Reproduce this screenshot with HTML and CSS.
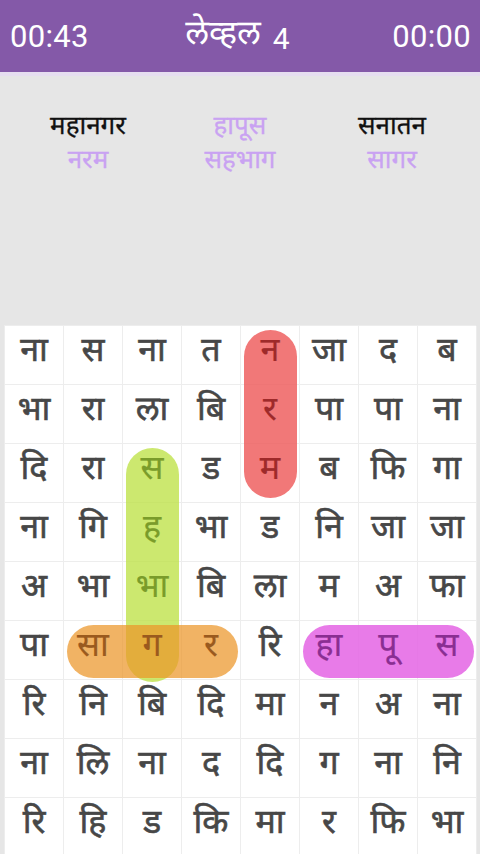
FILE: index.html
```html
<!DOCTYPE html>
<html lang="mr">
<head>
<meta charset="utf-8">
<link rel="stylesheet" href="styles.css">
</head>
<body>
<header class="topbar">
  <span class="time">00:43</span>
  <span class="level">लेव्हल <span class="num">4</span></span>
  <span class="time">00:00</span>
</header>
<section class="words">
  <span class="word">महानगर</span>
  <span class="word found">हापूस</span>
  <span class="word">सनातन</span>
  <span class="word found">नरम</span>
  <span class="word found">सहभाग</span>
  <span class="word found">सागर</span>
</section>
<main class="board">
  <div class="pill pill-red"></div>
  <div class="pill pill-green"></div>
  <div class="pill pill-orange"></div>
  <div class="pill pill-pink"></div>

  <div class="cell"><span>ना</span></div><div class="cell"><span>स</span></div><div class="cell"><span>ना</span></div><div class="cell"><span>त</span></div><div class="cell t-red"><span>न</span></div><div class="cell"><span>जा</span></div><div class="cell"><span>द</span></div><div class="cell"><span>ब</span></div>
  <div class="cell"><span>भा</span></div><div class="cell"><span>रा</span></div><div class="cell"><span>ला</span></div><div class="cell"><span>बि</span></div><div class="cell t-red"><span>र</span></div><div class="cell"><span>पा</span></div><div class="cell"><span>पा</span></div><div class="cell"><span>ना</span></div>
  <div class="cell"><span>दि</span></div><div class="cell"><span>रा</span></div><div class="cell t-green"><span>स</span></div><div class="cell"><span>ड</span></div><div class="cell t-red"><span>म</span></div><div class="cell"><span>ब</span></div><div class="cell"><span>फि</span></div><div class="cell"><span>गा</span></div>
  <div class="cell"><span>ना</span></div><div class="cell"><span>गि</span></div><div class="cell t-green"><span>ह</span></div><div class="cell"><span>भा</span></div><div class="cell"><span>ड</span></div><div class="cell"><span>नि</span></div><div class="cell"><span>जा</span></div><div class="cell"><span>जा</span></div>
  <div class="cell"><span>अ</span></div><div class="cell"><span>भा</span></div><div class="cell t-green"><span>भा</span></div><div class="cell"><span>बि</span></div><div class="cell"><span>ला</span></div><div class="cell"><span>म</span></div><div class="cell"><span>अ</span></div><div class="cell"><span>फा</span></div>
  <div class="cell"><span>पा</span></div><div class="cell t-orange"><span>सा</span></div><div class="cell t-orange"><span>ग</span></div><div class="cell t-orange"><span>र</span></div><div class="cell"><span>रि</span></div><div class="cell t-pink"><span>हा</span></div><div class="cell t-pink"><span>पू</span></div><div class="cell t-pink"><span>स</span></div>
  <div class="cell"><span>रि</span></div><div class="cell"><span>नि</span></div><div class="cell"><span>बि</span></div><div class="cell"><span>दि</span></div><div class="cell"><span>मा</span></div><div class="cell"><span>न</span></div><div class="cell"><span>अ</span></div><div class="cell"><span>ना</span></div>
  <div class="cell"><span>ना</span></div><div class="cell"><span>लि</span></div><div class="cell"><span>ना</span></div><div class="cell"><span>द</span></div><div class="cell"><span>दि</span></div><div class="cell"><span>ग</span></div><div class="cell"><span>ना</span></div><div class="cell"><span>नि</span></div>
  <div class="cell"><span>रि</span></div><div class="cell"><span>हि</span></div><div class="cell"><span>ड</span></div><div class="cell"><span>कि</span></div><div class="cell"><span>मा</span></div><div class="cell"><span>र</span></div><div class="cell"><span>फि</span></div><div class="cell"><span>भा</span></div>
</main>
</body>
</html>
```
FILE: styles.css
```css
html, body {
  margin: 0;
  padding: 0;
}
body {
  width: 480px;
  height: 854px;
  overflow: hidden;
  background: #e6e6e6;
  font-family: "Noto Sans Devanagari", "Lohit Devanagari", "Noto Sans", Roboto, sans-serif;
}
.topbar {
  height: 72px;
  background: #8459a8;
  border-bottom: 4px solid #e6def0;
  display: flex;
  align-items: center;
  justify-content: space-between;
  padding: 0 9px 0 10px;
  color: #ffffff;
}
.time {
  font-family: Roboto, "Liberation Sans", sans-serif;
  font-size: 31px;
  letter-spacing: 0.3px;
}
.level {
  font-size: 34px;
  margin-right: 6px;
  display: flex;
  align-items: center;
}
.level .num {
  font-family: Roboto, "Liberation Sans", sans-serif;
  font-size: 30px;
  margin-left: 12px;
  padding-top: 4px;
}
.words {
  display: grid;
  grid-template-columns: 176px 128px 176px;
  justify-items: center;
  padding-top: 35px;
  height: 249px;
  box-sizing: border-box;
  align-content: start;
}
.word {
  font-size: 26px;
  line-height: 34px;
  color: #111111;
  -webkit-text-stroke: 0.3px currentColor;
}
.found {
  color: #c9a2f2;
}
.board {
  position: relative;
  margin: 0 4px;
  display: grid;
  grid-template-columns: repeat(8, 59px);
  grid-auto-rows: 59px;
  background: #ffffff;
  border-top: 1px solid #ededed;
  border-left: 1px solid #ededed;
}
.cell {
  display: flex;
  align-items: center;
  justify-content: center;
  border-right: 1px solid #ededed;
  border-bottom: 1px solid #ededed;
  font-size: 34px;
  color: #474747;
  -webkit-text-stroke: 0.6px currentColor;
  padding-bottom: 4px;
  box-sizing: border-box;
}
.cell span {
  position: relative;
  z-index: 2;
}
.pill {
  position: absolute;
  z-index: 1;
  border-radius: 27px;
}
.pill-red {
  left: 239px;
  top: 4px;
  width: 53px;
  height: 168px;
  background: rgba(238, 90, 90, 0.82);
}
.pill-green {
  left: 121px;
  top: 122px;
  width: 53px;
  height: 234px;
  background: rgba(190, 225, 70, 0.78);
}
.pill-orange {
  left: 62px;
  top: 299px;
  width: 171px;
  height: 53px;
  background: rgba(236, 150, 40, 0.72);
}
.pill-pink {
  left: 298px;
  top: 299px;
  width: 171px;
  height: 53px;
  background: rgba(228, 100, 228, 0.85);
}
.t-red, .t-green, .t-orange, .t-pink { -webkit-text-stroke: 0.2px currentColor; }
.t-red { color: #9e2a2a; }
.t-green { color: #7a9c2a; }
.t-orange { color: #9a5a1e; }
.t-pink { color: #8a2e92; }
```
